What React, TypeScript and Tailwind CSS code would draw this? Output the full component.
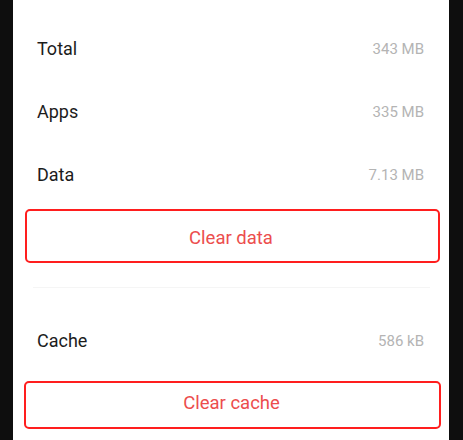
import React from 'react';

const font = { fontFamily: 'Roboto, "Noto Sans", sans-serif' };

const InfoRow: React.FC<{ label: string; value: string }> = ({ label, value }) => (
    <div className="h-[63px] flex items-center justify-between pl-[24px] pr-[25px]">
        <span className="text-[18px] leading-6 text-[#1c1c1c]">{label}</span>
        <span className="text-[15px] leading-5 text-[#b4b4b4]">{value}</span>
    </div>
);

export default function App() {
    return (
        <div className="h-[440px] w-[463px] overflow-hidden bg-[#0e0e0e] flex" style={font}>
            <div className="w-[13px] shrink-0" />
            <div className="w-[436px] bg-white pt-[17px]">
                <InfoRow label="Total" value="343 MB" />
                <InfoRow label="Apps" value="335 MB" />
                <InfoRow label="Data" value="7.13 MB" />

                <div className="mt-[3px] ml-[12px] mr-[9px] h-[54px] border-2 border-[#ff1e1e] rounded-[5px] flex items-center justify-center pt-[3px] pr-[3px]">
                    <span className="text-[18.5px] leading-6 text-[#ec4d4d]">Clear data</span>
                </div>

                <div className="mt-[24px] ml-[20px] mr-[19px] h-px bg-[#f5f5f5]" />

                <div className="mt-[21px]">
                    <InfoRow label="Cache" value="586 kB" />
                </div>

                <div className="mt-[9px] ml-[11px] mr-[8px] h-[48px] border-2 border-[#ff1e1e] rounded-[5px] flex items-center justify-center pb-[5px] pr-[2px]">
                    <span className="text-[18.5px] leading-6 text-[#ec4d4d]">Clear cache</span>
                </div>
            </div>
            <div className="flex-1" />
        </div>
    );
}
